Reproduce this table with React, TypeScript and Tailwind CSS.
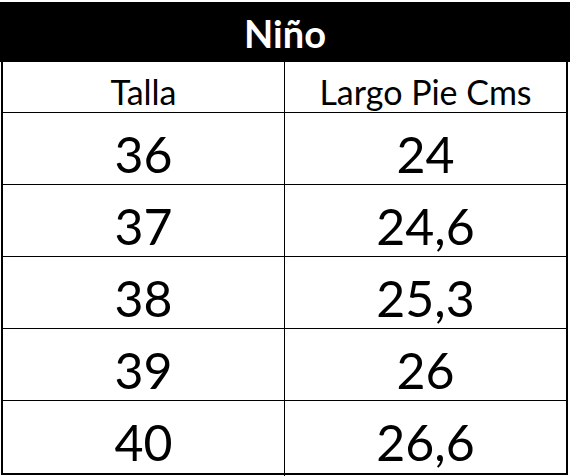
const rows: [string, string][] = [
  ["36", "24"],
  ["37", "24,6"],
  ["38", "25,3"],
  ["39", "26"],
  ["40", "26,6"],
];

export default function App() {
  return (
    <div className="w-[570px] h-[476px] bg-white pt-[2px] text-black" style={{ fontFamily: "Lato, 'Open Sans', sans-serif" }}>
      <div className="flex h-[60px] w-[570px] items-center justify-center bg-black pt-[2px] text-[38px] font-bold text-white">
        Niño
      </div>
      <div className="ml-[1px] w-[567px] border-x-2 border-b-2 border-black">
        <div className="grid h-[51px] grid-cols-[282px_1fr] border-b border-black">
          <div className="flex items-center justify-center border-r border-black pt-[4px] text-[34px]">Talla</div>
          <div className="flex items-center justify-center pt-[4px] text-[34px]">Largo Pie Cms</div>
        </div>
        {rows.map(([talla, largo], i) => (
          <div
            key={talla}
            className={`grid h-[72px] grid-cols-[282px_1fr] ${i < rows.length - 1 ? "border-b border-black" : ""}`}
          >
            <div className="flex items-center justify-center border-r border-black pt-[4px] text-[50px]">{talla}</div>
            <div className="flex items-center justify-center pt-[4px] text-[50px]">{largo}</div>
          </div>
        ))}
      </div>
    </div>
  );
}
